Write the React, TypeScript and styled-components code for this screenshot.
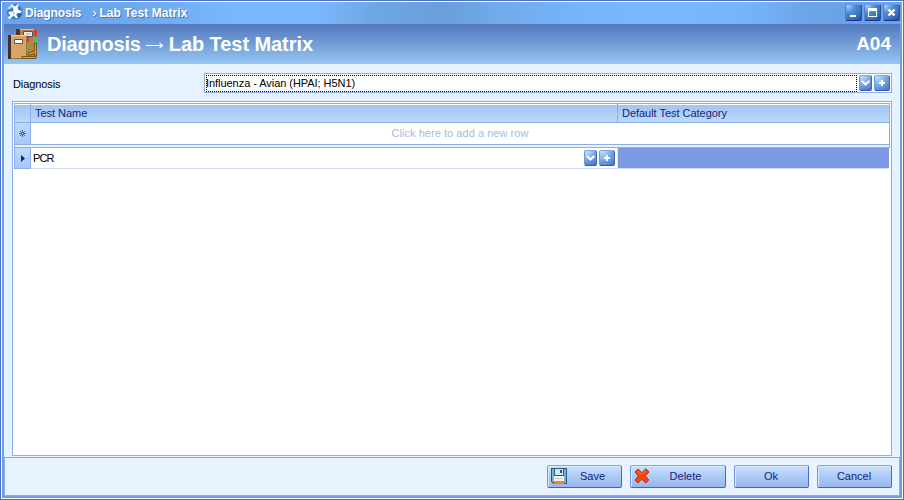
import React from 'react';
import styled, { createGlobalStyle } from 'styled-components';

const GlobalStyle = createGlobalStyle`
  * { box-sizing: border-box; }
  html, body { margin: 0; padding: 0; overflow: hidden; }
  body { font-family: "Liberation Sans", Arial, sans-serif; font-size: 11px; color: #000; }
  svg { display: block; flex: none; }
`;

const line = '#8aaee9';

const Window = styled.div`
  width: 904px;
  height: 500px;
  border: 1px solid #4c6fc2;
  background: #6c9fe4;
  box-shadow: inset 0 0 0 1px #fff;
  padding: 1px 3px 3px 3px;
  display: flex;
  flex-direction: column;
`;

const TitleBar = styled.div`
  height: 22px;
  flex: none;
  margin: 0 -2px;
  padding: 0 2px 0 4px;
  display: flex;
  align-items: flex-start;
  background: linear-gradient(90deg, #69a3ea 0%, #6da9ef 15%, #7bb8ff 27%, #7ab6fa 35%, #6ca6e3 42%, #6a9edb 49%, #70abeb 55%, #76b4f8 64%, #7bb8ff 73%, #76b4f7 83%, #6aa4e6 90%, #6ba3e4 100%);
`;

const TitleText = styled.div<{ $gap: number; $spacing: number; $light?: boolean }>`
  margin-left: ${p => p.$gap}px;
  line-height: 22px;
  font-size: 12px;
  font-weight: ${p => (p.$light ? 'normal' : 'bold')};
  letter-spacing: ${p => p.$spacing}px;
  color: #fff;
  white-space: pre;
  text-shadow: 1px 1px 0 #4a72bd;
`;

const WindowControls = styled.div`
  margin-left: auto;
  padding: 2px 0 0 0;
  display: flex;
  gap: 2px;
`;

const GlossButton = styled.button<{ $w: number; $dark?: boolean }>`
  width: ${p => p.$w}px;
  height: ${p => (p.$dark ? 17 : 16)}px;
  flex: none;
  padding: 0;
  display: flex;
  align-items: center;
  justify-content: center;
  border-radius: 2px;
  border: 1px solid;
  border-color: ${p => (p.$dark ? '#5f98e5 #2451a5 #17338d #4b80d2' : '#7caae8 #3d63bb #3755b0 #6c9ae1')};
  background: ${p =>
    p.$dark
      ? 'radial-gradient(circle at 10% 0%, #a5d2ff 0%, #4c86d4 42%, #3c78c8 65%, #1e479f 100%)'
      : 'radial-gradient(circle at 15% 0%, #c3e1ff 0%, #79a9e6 50%, #456ec4 100%)'};
`;

const Header = styled.header`
  height: 40px;
  flex: none;
  padding: 0 9px 0 3px;
  display: flex;
  align-items: center;
  color: #fff;
  font-weight: bold;
  background: linear-gradient(#5479bf, #739dd6 50%, #97c8f5);
`;

const Heading = styled.h1`
  margin: 0 0 0 8px;
  font-size: 20px;
  line-height: 40px;
  display: flex;
  align-items: center;
  letter-spacing: -0.2px;
`;

const Topic = styled.span`
  letter-spacing: -0.07px;
`;

const Arrow = styled.span`
  width: 18px;
  margin: 3px 5px 0 5px;
`;

const Code = styled.span`
  margin-left: auto;
  font-size: 19px;
`;

const Body = styled.main`
  flex: 1;
  background: #e6f2ff;
  padding: 9px 8px 1px;
  display: flex;
  flex-direction: column;
`;

const Field = styled.div`
  height: 20px;
  display: flex;
  align-items: center;
`;

const FieldLabel = styled.span`
  width: 192px;
  padding: 1px 0 0 1px;
  letter-spacing: -0.1px;
`;

const Combo = styled.div`
  flex: 1;
  height: 20px;
  display: flex;
  align-items: center;
  gap: 2px;
  padding: 0 1px;
  border: 1px solid ${line};
  background: #fff;
`;

const ComboValue = styled.div`
  flex: 1;
  height: 17px;
  line-height: 15px;
  border: 1px dotted #000;
  text-indent: -1px;
  letter-spacing: -0.05px;
`;

const GridFrame = styled.section`
  flex: 1;
  margin-top: 8px;
  padding: 1px;
  border: 1px solid ${line};
  background: #fff;
`;

const GridTable = styled.div`
  display: grid;
  grid-template-columns: 17px 587px 1fr;
`;

const HeadCell = styled.div`
  height: 20px;
  border: solid ${line};
  border-width: 1px 1px 1px 0;
  box-shadow: inset 0 1px #fff;
  background: linear-gradient(#a0c3f2, #bcdafb);
  color: #10247e;
  padding-left: 4px;
  line-height: 18px;
  letter-spacing: -0.03px;
  &:first-child { border-left-width: 1px; }
`;

const Indicator = styled.div<{ $last?: boolean }>`
  height: 21px;
  border: solid ${line};
  border-width: 0 1px ${p => (p.$last ? 1 : 0)}px;
  background: linear-gradient(#bddafa, #a6c8f4);
  display: flex;
  align-items: center;
  justify-content: center;
`;

const NewRow = styled.div`
  grid-column: 2 / 4;
  height: 21px;
  line-height: 20px;
  text-align: center;
  border-right: 1px solid ${line};
  color: #9fbbe8;
  letter-spacing: 0.04px;
`;

const Divider = styled.div`
  grid-column: 1 / 4;
  height: 4px;
  border: 1px solid ${line};
  background: #e9f3ff;
`;

const EditCell = styled.div`
  height: 21px;
  display: flex;
  align-items: center;
  gap: 2px;
  padding: 0 2px;
  border-right: 1px solid #d8e4f8;
  border-bottom: 1px solid #d0def7;
`;

const EditText = styled.span`
  flex: 1;
  letter-spacing: -0.9px;
`;

const SelectedCell = styled.div`
  height: 21px;
  margin-right: 1px;
  background: #7e99e4;
  border-bottom: 1px solid #d0def7;
`;

const Footer = styled.footer`
  height: 39px;
  flex: none;
  padding: 7px 7px 0 0;
  display: flex;
  justify-content: flex-end;
  gap: 8px;
  border: 1px solid ${line};
  background: #e9f3ff;
`;

const ActionButton = styled.button<{ $w: number }>`
  width: ${p => p.$w}px;
  height: 23px;
  padding: 0 4px 1px 3px;
  display: flex;
  align-items: center;
  font: 11px "Liberation Sans", Arial, sans-serif;
  color: #10247e;
  border: 1px solid;
  border-color: #84a9e7 #4969bd #4362b9 #7597dc;
  border-radius: 2px;
  box-shadow: inset 1px 1px #d7e8ff;
  background: linear-gradient(#c8e0ff, #aecbf7 50%, #97b6ed);
`;

const ActionLabel = styled.span`
  flex: 1;
  text-align: center;
`;

const Chevron = () => (
  <svg width="9" height="6" viewBox="0 0 9 6">
    <path d="M0.7 1 L4.5 4.4 L8.3 1" fill="none" stroke="#fff" strokeWidth="2" />
  </svg>
);

const Plus = () => (
  <svg width="6" height="6" viewBox="0 0 6 6" shapeRendering="crispEdges">
    <path d="M2 0h2v2h2v2H4v2H2V4H0V2h2z" fill="#fff" />
  </svg>
);

const AppIcon = () => (
  <svg width="17" height="19" viewBox="0 -1 17 19">
    <circle cx="8.6" cy="8.8" r="7.8" fill="#3e7dcc" />
    <path d="M1 7Q2 2 7 1L6 5Z" fill="#a9dbff" />
    <path d="M11 12L16 9Q16 14 11 16Z" fill="#245eb4" />
    <path d="M5 0.5L8.8 3.4L13 0.5L11.6 5Q12 7.5 16 8.3L14.5 10.3Q11 9.6 10.2 11.5L12 14.8L10 15.3L7.7 12.6L4 16L1.5 15L4.4 12L2 9.8L4 8.6L7 8.8L7.6 6.4Z" fill="#fff" />
    <path d="M6.5 10.8L9 8.8L8.5 11.3Z" fill="#79aee2" />
  </svg>
);

const Books = () => (
  <svg width="32" height="32" viewBox="0 0 32 32">
    <path d="M10 1h17v28H13z" fill="#bb8144" />
    <path d="M9 1h4v6H9z" fill="#4b352e" />
    <path d="M13 1h14v1H13z" fill="#e5b576" />
    <path d="M27 2h3v5h-3z" fill="#d83b30" />
    <path d="M27 7h3v18h-3z" fill="#a26a35" />
    <path d="M16.5 3.5h9v5h-9z" fill="#e9ecee" stroke="#4c5159" />
    <path d="M19 6h5" stroke="#a8acb0" />
    <path d="M20 9h2v5h-2z" fill="#d43d24" />
    <path d="M20 15h2v8h-2z" fill="#5ab443" />
    <path d="M27 9h3v6h-3z" fill="#5cba62" />
    <path d="M27 15h3v5h-3z" fill="#c4444a" />
    <path d="M1 7h18l1 1v23H1z" fill="#d7a566" />
    <path d="M1 7h3v24H1z" fill="#40302d" />
    <path d="M4 7h15v1H4z" fill="#f1cc95" />
    <path d="M19.5 8v22.5H4" fill="none" stroke="#a87139" />
    <path d="M7.5 11.5h8v4h-8z" fill="#fff" stroke="#51575c" />
    <g fill="none" stroke="#5b3a0d" strokeWidth="3" strokeLinecap="round">
      <path d="M16 29.5h12M22 26l6-2M28.5 16v11" />
    </g>
    <g fill="none" stroke="#e0a32f" strokeWidth="1.5" strokeLinecap="round">
      <path d="M16 29.5h12M22 26l6-2M28.5 16v11" />
    </g>
  </svg>
);

const Floppy = () => (
  <svg width="17" height="17" viewBox="0 0 17 17" shapeRendering="crispEdges">
    <path d="M0 0h16v16H2L0 14z" fill="#245d79" />
    <path d="M1 1h2v13H1zM13 1h2v14h-2z" fill="#74b5ce" />
    <path d="M4 1h8v6H4z" fill="#d4e6e9" />
    <path d="M9 2h2v3H9z" fill="#345c70" />
    <path d="M3 8h10v5H3z" fill="#f2f5f7" />
    <path d="M4 10h8v1H4z" fill="#b7cbd2" />
    <path d="M3 13h10v3H3z" fill="#ff8500" />
  </svg>
);

const DeleteIcon = () => (
  <svg width="16" height="16" viewBox="0 0 16 16">
    <path d="M4 1L7.8 4.7L12 0.8L15 4L11.3 7.7L14.6 12L11.8 15L7.7 11.2L3.8 15L1 12L4.4 8L1 4Z" fill="#f9460d" stroke="#96301c" strokeLinejoin="round" />
    <path d="M3.5 2.7L7.7 6.4L11.8 2.5" fill="none" stroke="#ff7a48" />
  </svg>
);

const App = () => (
  <>
    <GlobalStyle />
    <Window>
      <TitleBar>
        <AppIcon />
        <TitleText $gap={2} $spacing={-0.1}>Diagnosis</TitleText>
        <TitleText $gap={11} $spacing={0} $light>›</TitleText>
        <TitleText $gap={3} $spacing={0.06}>Lab Test Matrix</TitleText>
        <WindowControls>
          <GlossButton $w={17} $dark aria-label="Minimize">
            <svg width="11" height="11" viewBox="0 0 11 11" shapeRendering="crispEdges"><path d="M2 8h6v2H2z" fill="#fff" /></svg>
          </GlossButton>
          <GlossButton $w={17} $dark aria-label="Maximize">
            <svg width="9" height="9" viewBox="0 0 9 9" shapeRendering="crispEdges"><path d="M0 0h9v9H0zM1 3v5h7V3z" fill="#fff" fillRule="evenodd" /></svg>
          </GlossButton>
          <GlossButton $w={17} $dark aria-label="Close">
            <svg width="9" height="9" viewBox="0 0 9 9"><path d="M1.5 1.5L7.5 7.5M7.5 1.5L1.5 7.5" stroke="#fff" strokeWidth="2.3" /></svg>
          </GlossButton>
        </WindowControls>
      </TitleBar>
      <Header>
        <Books />
        <Heading>
          Diagnosis
          <Arrow>
            <svg width="18" height="7" viewBox="0 0 18 7"><path d="M0 3.5h17M13.5 0.8l3 2.7l-3 2.7" fill="none" stroke="#fff" strokeWidth="1.1" /></svg>
          </Arrow>
          <Topic>Lab Test Matrix</Topic>
        </Heading>
        <Code>A04</Code>
      </Header>
      <Body>
        <Field>
          <FieldLabel>Diagnosis</FieldLabel>
          <Combo>
            <ComboValue>Influenza - Avian (HPAI; H5N1)</ComboValue>
            <GlossButton $w={13} aria-label="Open list"><Chevron /></GlossButton>
            <GlossButton $w={16} aria-label="Add"><Plus /></GlossButton>
          </Combo>
        </Field>
        <GridFrame>
          <GridTable>
            <HeadCell />
            <HeadCell>Test Name</HeadCell>
            <HeadCell>Default Test Category</HeadCell>
            <Indicator>
              <svg width="7" height="7" viewBox="0 0 7 7"><path d="M3.5 0v7M0 3.5h7M1 1l5 5M6 1L1 6" stroke="#263f98" strokeWidth="0.8" /><circle cx="3.5" cy="3.5" r="0.8" fill="#c5dcfa" /></svg>
            </Indicator>
            <NewRow>Click here to add a new row</NewRow>
            <Divider />
            <Indicator $last>
              <svg width="4" height="7" viewBox="0 0 4 7"><path d="M0 0L4 3.5L0 7z" fill="#10247e" /></svg>
            </Indicator>
            <EditCell>
              <EditText>PCR</EditText>
              <GlossButton $w={13} aria-label="Open list"><Chevron /></GlossButton>
              <GlossButton $w={16} aria-label="Add"><Plus /></GlossButton>
            </EditCell>
            <SelectedCell />
          </GridTable>
        </GridFrame>
      </Body>
      <Footer>
        <ActionButton $w={75}><Floppy /><ActionLabel>Save</ActionLabel></ActionButton>
        <ActionButton $w={96}><DeleteIcon /><ActionLabel>Delete</ActionLabel></ActionButton>
        <ActionButton $w={75}><ActionLabel>Ok</ActionLabel></ActionButton>
        <ActionButton $w={75}><ActionLabel>Cancel</ActionLabel></ActionButton>
      </Footer>
    </Window>
  </>
);

export default App;
